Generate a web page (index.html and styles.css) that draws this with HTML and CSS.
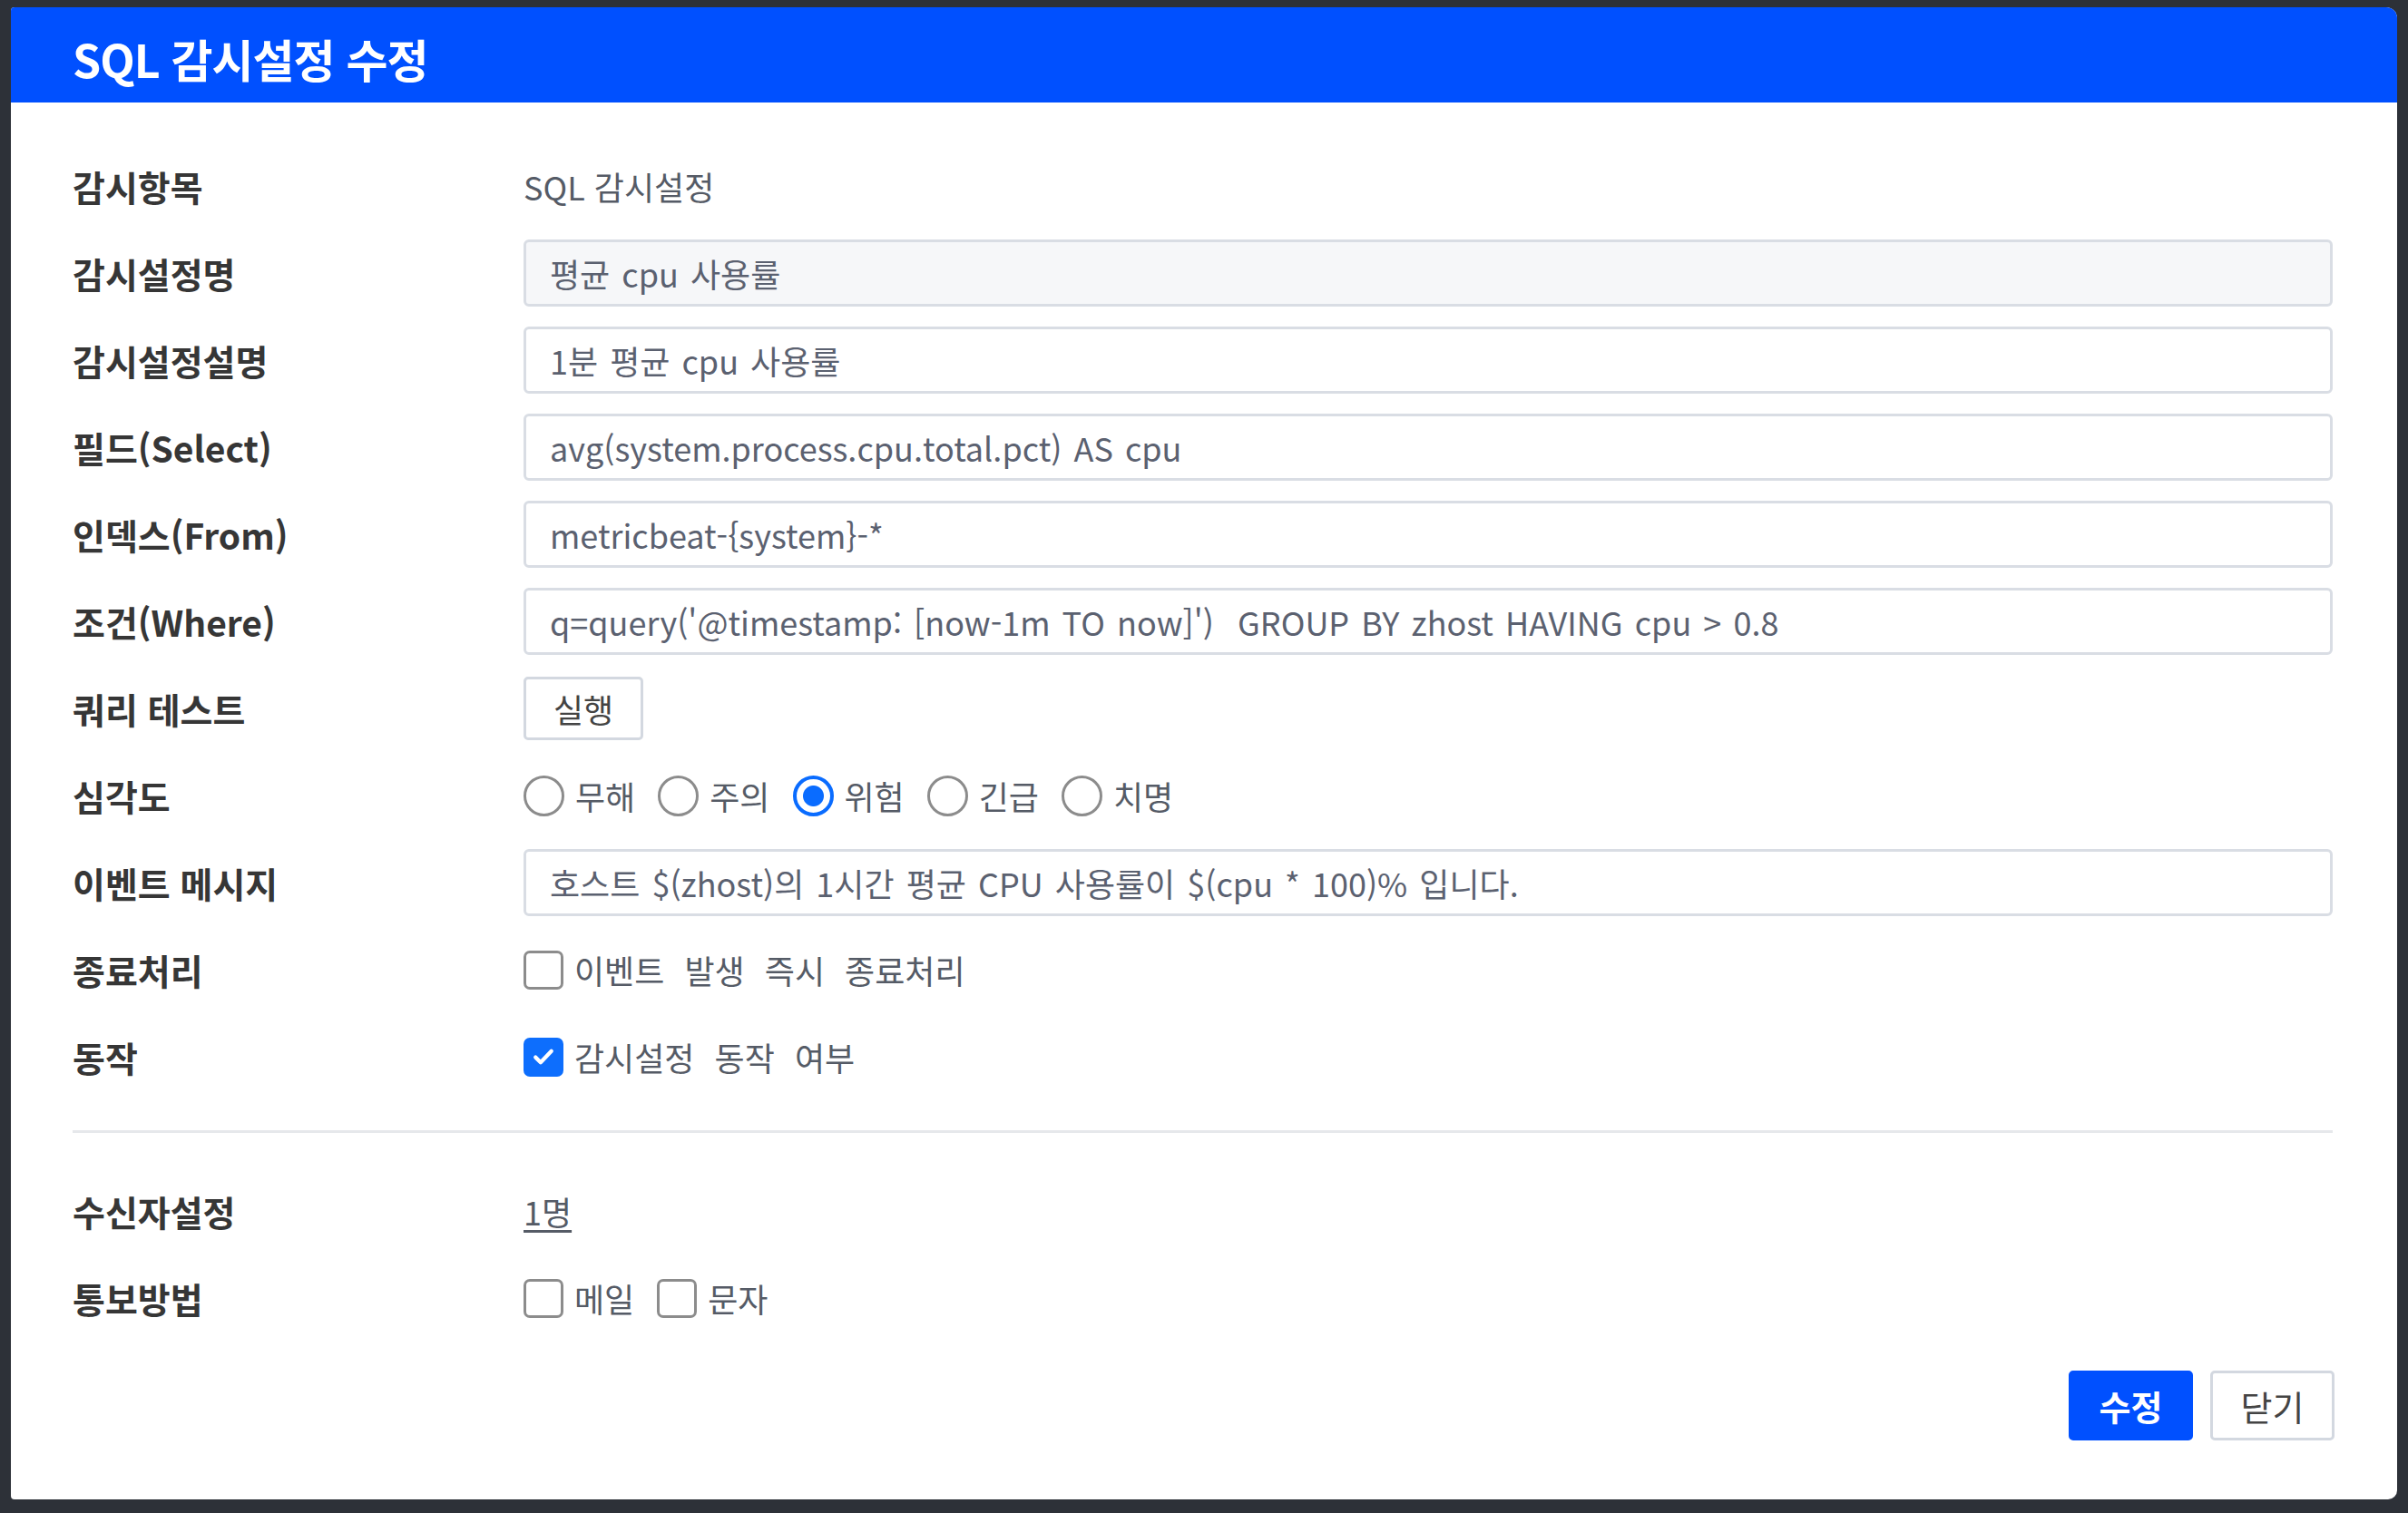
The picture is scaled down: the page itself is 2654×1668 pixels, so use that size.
FILE: index.html
```html
<!DOCTYPE html>
<html lang="ko">

<head>
    <meta charset="UTF-8" />
    <title>SQL 감시설정 수정</title>
    <link rel="stylesheet" href="styles.css">
</head>

<body>

    <div class="dialog">
        <!-- Header -->
        <div class="dialog-header">
            <h1>SQL 감시설정 수정</h1>
        </div>

        <!-- Form -->
        <div class="dialog-body">
            <div class="form-row">
                <div class="label">감시항목</div>
                <div class="value">SQL 감시설정</div>
            </div>
            <div class="form-row">
                <div class="label">감시설정명</div>
                <div class="field readonly">평균 cpu 사용률</div>
            </div>
            <div class="form-row">
                <div class="label">감시설정설명</div>
                <div class="field">1분 평균 cpu 사용률</div>
            </div>
            <div class="form-row">
                <div class="label">필드(Select)</div>
                <div class="field">avg(system.process.cpu.total.pct) AS cpu</div>
            </div>
            <div class="form-row">
                <div class="label">인덱스(From)</div>
                <div class="field">metricbeat-{system}-*</div>
            </div>
            <div class="form-row">
                <div class="label">조건(Where)</div>
                <div class="field">q=query('@timestamp: [now-1m TO now]')&nbsp;&nbsp;GROUP BY zhost HAVING cpu &gt; 0.8</div>
            </div>
            <div class="form-row">
                <div class="label">쿼리 테스트</div>
                <div><button class="btn-small">실행</button></div>
            </div>
            <div class="form-row">
                <div class="label">심각도</div>
                <div class="options">
                    <label class="radio"><span class="dot"></span>무해</label>
                    <label class="radio"><span class="dot"></span>주의</label>
                    <label class="radio checked"><span class="dot"></span>위험</label>
                    <label class="radio"><span class="dot"></span>긴급</label>
                    <label class="radio"><span class="dot"></span>치명</label>
                </div>
            </div>
            <div class="form-row">
                <div class="label">이벤트 메시지</div>
                <div class="field">호스트 $(zhost)의 1시간 평균 CPU 사용률이 $(cpu * 100)% 입니다.</div>
            </div>
            <div class="form-row">
                <div class="label">종료처리</div>
                <div class="options">
                    <label class="check"><span class="box"></span>이벤트 발생 즉시 종료처리</label>
                </div>
            </div>
            <div class="form-row">
                <div class="label">동작</div>
                <div class="options">
                    <label class="check checked">
                        <span class="box">
                            <svg viewBox="0 0 24 24" width="30" height="30">
                                <path d="M5 12.5l4.5 4.5L19 7" fill="none" stroke="#fff" stroke-width="3.4" stroke-linecap="round" stroke-linejoin="round" />
                            </svg>
                        </span>감시설정 동작 여부
                    </label>
                </div>
            </div>

            <hr class="divider">

            <div class="form-row">
                <div class="label">수신자설정</div>
                <div class="value"><a href="#" class="link">1명</a></div>
            </div>
            <div class="form-row">
                <div class="label">통보방법</div>
                <div class="options">
                    <label class="check"><span class="box"></span>메일</label>
                    <label class="check"><span class="box"></span>문자</label>
                </div>
            </div>
        </div>

        <!-- Footer -->
        <div class="dialog-footer">
            <button class="btn btn-primary">수정</button>
            <button class="btn">닫기</button>
        </div>
    </div>

</body>

</html>
```

FILE: styles.css
```css
* {
    box-sizing: border-box;
}

body {
    margin: 0;
    height: 1668px;
    background: #2d3138;
    font-family: 'Noto Sans CJK KR', 'Noto Sans', sans-serif;
    color: #333;
    overflow: hidden;
}

.dialog {
    margin: 8px 12px 15px 12px;
    height: 1645px;
    background: #fff;
    border-radius: 4px 12px 10px 4px;
    overflow: hidden;
    display: flex;
    flex-direction: column;
}

.dialog-header {
    height: 105px;
    background: #0050ff;
    display: flex;
    align-items: center;
    padding: 6px 68px 0;
}

.dialog-header h1 {
    margin: 0;
    color: #fff;
    font-size: 50px;
    font-weight: 700;
    letter-spacing: -1px;
}

.dialog-body {
    padding: 44px 71px 0 68px;
}

.form-row {
    display: grid;
    grid-template-columns: 497px 1fr;
    align-items: center;
    height: 96px;
}

.label {
    font-size: 39px;
    font-weight: 600;
    color: #363636;
}

.value {
    font-size: 36px;
    color: #555b66;
}

.field {
    height: 74px;
    border: 3px solid #d9dde4;
    border-radius: 6px;
    padding: 0 26px;
    display: flex;
    align-items: center;
    font-size: 36px;
    color: #5b6170;
    white-space: nowrap;
    overflow: hidden;
    word-spacing: 3px;
}

.field.readonly {
    background: #f6f7f9;
}

.btn-small {
    width: 132px;
    height: 70px;
    background: #fff;
    border: 3px solid #d3d8e0;
    border-radius: 5px;
    font-family: inherit;
    font-size: 36px;
    color: #444;
    padding: 0;
}

.options {
    display: flex;
    align-items: center;
    gap: 25px;
}

.radio,
.check {
    display: flex;
    align-items: center;
    gap: 12px;
    font-size: 36px;
    color: #555b66;
    word-spacing: 12px;
}

.radio .dot {
    width: 45px;
    height: 45px;
    border: 3px solid #8c8c8c;
    border-radius: 50%;
    background: #fff;
}

.radio.checked .dot {
    border: 4px solid #0a6cff;
    background: radial-gradient(circle, #0a6cff 0 11px, #fff 12px);
}

.check .box {
    width: 44px;
    height: 43px;
    border: 3px solid #8c8c8c;
    border-radius: 7px;
    background: #fff;
    display: flex;
    align-items: center;
    justify-content: center;
}

.check.checked .box {
    border: none;
    background: #0d6efd;
}

.divider {
    border: none;
    height: 3px;
    background: #e6e8eb;
    margin: 33px 0 38px;
}

.link {
    color: #555b66;
    text-decoration: underline;
    text-underline-offset: 5px;
}

.dialog-footer {
    display: flex;
    justify-content: flex-end;
    gap: 19px;
    padding: 32px 69px 0 0;
}

.btn {
    width: 137px;
    height: 77px;
    background: #fff;
    border: 3px solid #d3d8e0;
    border-radius: 5px;
    font-family: inherit;
    font-size: 38px;
    color: #444;
    padding: 0;
}

.btn-primary {
    background: #0050ff;
    border-color: #0050ff;
    color: #fff;
    font-weight: 700;
}
```
